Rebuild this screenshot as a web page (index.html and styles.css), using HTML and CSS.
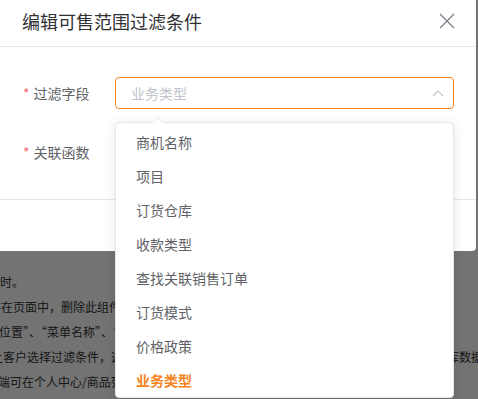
FILE: index.html
```html
<!DOCTYPE html>
<html lang="zh-CN">
<head>
    <meta charset="UTF-8">
    <meta name="viewport" content="width=device-width, initial-scale=1.0">
    <title>编辑可售范围过滤条件</title>
    <link rel="stylesheet" href="styles.css">
</head>
<body>
    <div class="page">
        <p class="line l1">时。</p>
        <p class="line l2">存在页面中，删除此组件</p>
        <p class="line l3">位置”、“菜单名称”、“显</p>
        <p class="line l4">让客户选择过滤条件，这样客户在下单时只能看到符合条件的商品，便于商家管理商品库数据</p>
        <p class="line l5">端可在个人中心/商品列</p>
    </div>

    <div class="overlay"></div>

    <div class="dialog">
        <div class="dialog-header">
            <span class="dialog-title">编辑可售范围过滤条件</span>
            <svg class="close" width="16" height="16" viewBox="0 0 16 16">
                <path d="M1 1 L15 15 M15 1 L1 15" stroke="#7d828c" stroke-width="1.4" fill="none"/>
            </svg>
        </div>
        <div class="dialog-body">
            <div class="form-item">
                <label class="form-label"><span class="req">*</span>过滤字段</label>
                <div class="select">
                    <span class="placeholder">业务类型</span>
                    <svg class="arrow" width="12" height="8" viewBox="0 0 12 8">
                        <path d="M1 7 L6 2 L11 7" stroke="#c0c4cc" stroke-width="1.2" fill="none"/>
                    </svg>
                </div>
            </div>
            <div class="form-item">
                <label class="form-label"><span class="req">*</span>关联函数</label>
            </div>
        </div>
        <div class="dialog-footer"></div>
    </div>

    <div class="dropdown">
        <span class="dropdown-arrow"></span>
        <ul class="options">
            <li>商机名称</li>
            <li>项目</li>
            <li>订货仓库</li>
            <li>收款类型</li>
            <li>查找关联销售订单</li>
            <li>订货模式</li>
            <li>价格政策</li>
            <li class="selected">业务类型</li>
        </ul>
    </div>
</body>
</html>
```

FILE: styles.css
```css
body {
    margin: 0;
    width: 478px;
    height: 399px;
    overflow: hidden;
    position: relative;
    background: #fff;
    font-family: "Noto Sans CJK SC", "Liberation Sans", sans-serif;
}

/* page behind the modal */
.page {
    padding-top: 272px;
}

.line {
    margin: 0;
    height: 25px;
    line-height: 20px;
    font-size: 12px;
    color: #333;
    white-space: nowrap;
    overflow: hidden;
}

.l1 { text-indent: 0; }
.l2 { text-indent: -11px; }
.l3 { text-indent: -1px; }
.l4 { text-indent: -9px; }
.l5 { text-indent: -2px; }

.overlay {
    position: absolute;
    inset: 0;
    background: rgba(0, 0, 0, 0.55);
}

/* dialog */
.dialog {
    position: absolute;
    top: -4px;
    left: -4px;
    width: 480px;
    height: 255px;
    background: #fff;
    border-radius: 4px;
    display: flex;
    flex-direction: column;
}

.dialog-header {
    height: 51px;
    box-sizing: border-box;
    border-bottom: 1px solid #e4e7ed;
    display: flex;
    align-items: center;
    justify-content: space-between;
    padding: 0 21px 0 26px;
}

.dialog-title {
    font-size: 18px;
    color: #303133;
}

.close {
    display: block;
}

.dialog-body {
    height: 153px;
    border-bottom: 1px solid #e4e7ed;
    padding-top: 30px;
    box-sizing: border-box;
}

.form-item {
    display: flex;
    align-items: center;
    height: 32px;
    margin-bottom: 27px;
}

.form-label {
    width: 119px;
    padding-left: 27px;
    box-sizing: border-box;
    font-size: 14px;
    color: #606266;
}

.req {
    color: #f56c6c;
    margin-right: 4px;
}

.select {
    width: 339px;
    height: 32px;
    box-sizing: border-box;
    border: 1px solid #f6851f;
    border-radius: 4px;
    display: flex;
    align-items: center;
    justify-content: space-between;
    padding: 0 9px 0 15px;
}

.placeholder {
    font-size: 14px;
    color: #c0c4cc;
}

/* dropdown popper */
.dropdown {
    position: absolute;
    top: 122px;
    left: 115px;
    width: 339px;
    box-sizing: border-box;
    background: #fff;
    border: 1px solid #e4e7ed;
    border-radius: 4px;
    box-shadow: 0 2px 12px rgba(0, 0, 0, 0.1);
}

.dropdown-arrow {
    position: absolute;
    top: -6px;
    left: 36px;
    width: 0;
    height: 0;
    border-left: 6px solid transparent;
    border-right: 6px solid transparent;
    border-bottom: 6px solid #e4e7ed;
}

.dropdown-arrow::after {
    content: "";
    position: absolute;
    top: 1px;
    left: -5px;
    border-left: 5px solid transparent;
    border-right: 5px solid transparent;
    border-bottom: 5px solid #fff;
}

.options {
    list-style: none;
    margin: 0;
    padding: 2px 0 0;
}

.options li {
    height: 34px;
    line-height: 34px;
    padding-left: 20px;
    font-size: 14px;
    color: #606266;
}

.options li.selected {
    color: #f6851f;
    font-weight: bold;
}
```
